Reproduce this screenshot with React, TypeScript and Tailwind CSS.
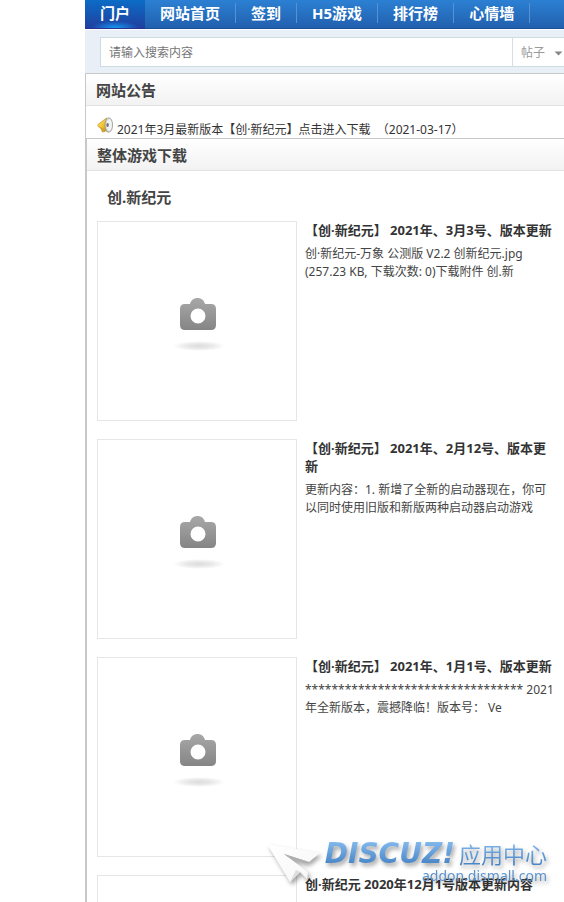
import React from "react";

interface Post {
  title: string;
  summary: string;
}

const navItems = ["网站首页", "签到", "H5游戏", "排行榜", "心情墙"];

const posts: Post[] = [
  {
    title: "【创·新纪元】 2021年、3月3号、版本更新",
    summary:
      "创·新纪元-万象 公测版 V2.2 创新纪元.jpg (257.23 KB, 下载次数: 0)下载附件 创.新",
  },
  {
    title: "【创·新纪元】 2021年、2月12号、版本更新",
    summary:
      "更新内容：1. 新增了全新的启动器现在，你可以同时使用旧版和新版两种启动器启动游戏",
  },
  {
    title: "【创·新纪元】 2021年、1月1号、版本更新",
    summary:
      "********************************* 2021年全新版本，震撼降临！版本号： Ve",
  },
  {
    title: "创·新纪元 2020年12月1号版本更新内容",
    summary: "",
  },
];

const CameraIcon: React.FC = () => (
  <svg width="54" height="56" viewBox="0 0 54 56" aria-hidden="true">
    <defs>
      <linearGradient id="camera" x1="0" y1="0" x2="0" y2="1">
        <stop offset="0" stopColor="#a8a8a8" />
        <stop offset="1" stopColor="#858585" />
      </linearGradient>
      <radialGradient id="shadow">
        <stop offset="0" stopColor="#dcdcdc" />
        <stop offset="0.5" stopColor="#e9e9e9" />
        <stop offset="1" stopColor="#ffffff" />
      </radialGradient>
    </defs>
    <path
      fill="url(#camera)"
      fillRule="evenodd"
      d="M14 7 H19 C20 3 23 1 26.500 1 C30 1 33 3 34 7 H40 Q45 7 45 12 V28 Q45 33 40 33 H14 Q9 33 9 28 V12 Q9 7 14 7 Z M27 11.500 A7.500 7.500 0 1 0 27 26.500 A7.500 7.500 0 1 0 27 11.500 Z"
    />
    <ellipse cx="28" cy="49" rx="26" ry="5" fill="url(#shadow)" />
  </svg>
);

const HornIcon: React.FC = () => (
  <svg width="16" height="16" viewBox="0 0 16 16" aria-hidden="true">
    <defs>
      <linearGradient id="horn" x1="0" y1="0" x2="1" y2="1">
        <stop offset="0" stopColor="#fdf08a" />
        <stop offset="0.6" stopColor="#f0b81c" />
        <stop offset="1" stopColor="#9a6a10" />
      </linearGradient>
    </defs>
    <path d="M3 9.500 L6 10.500 L8 14.500 L5.500 15 Z" fill="#e0b02a" stroke="#a87c1c" strokeWidth="0.6" />
    <path d="M1 7.500 L9.500 1 L11 15 L1.500 9.800 Q0.500 9 1 7.500 Z" fill="url(#horn)" stroke="#c0942a" strokeWidth="0.7" />
    <ellipse cx="11.800" cy="8" rx="3.800" ry="7.200" fill="#d9dde2" stroke="#98958a" strokeWidth="0.8" />
    <ellipse cx="12.300" cy="8" rx="2.500" ry="5.700" fill="#f1f3f5" />
    <ellipse cx="10.600" cy="8" rx="1.200" ry="2.100" fill="#6c6f76" />
  </svg>
);

const Nav: React.FC = () => (
  <nav className="flex h-[29px] border-b border-[#1d4f95] bg-linear-to-b from-[#2c80d3] to-[#2160ae] text-[15px] leading-[26px] font-bold whitespace-nowrap text-white">
    <a
      href="#portal"
      className="h-[29px] border-b border-[#29328f] bg-[radial-gradient(ellipse_24px_7px_at_50%_100%,#149bf5,transparent),linear-gradient(#0b6cc6,#2040a0)] px-[15px]"
    >
      门户
    </a>
    {navItems.map((item) => (
      <div key={item} className="flex">
        <a href={`#${item}`} className="px-[15px]">
          {item}
        </a>
        <span className="mt-[3px] h-5 w-px bg-[#5593d6]" />
      </div>
    ))}
  </nav>
);

const SearchBar: React.FC = () => (
  <form className="mt-px flex bg-[#e8eff7] pt-[7px] pb-[6px] pl-[15px] text-xs">
    <div className="flex h-[30px] flex-1 border-y border-l border-[#cedce4] bg-white">
      <input
        type="text"
        aria-label="搜索"
        placeholder="请输入搜索内容"
        className="min-w-0 flex-1 px-2 pt-0.5 outline-none placeholder:text-[#757575]"
      />
      <div className="flex items-center border-l border-[#d8dfe4] pt-0.5 pl-2 text-[#999]">
        <select aria-label="搜索类型" className="w-[33px] appearance-none outline-none">
          <option>帖子</option>
        </select>
        <svg width="10" height="5" viewBox="0 0 10 5" aria-hidden="true">
          <path d="M0.500 0.500 H8.500 L4.500 4.500 Z" fill="#888" />
        </svg>
      </div>
    </div>
  </form>
);

const PanelTitle: React.FC<{ children: React.ReactNode }> = ({ children }) => (
  <h2 className="h-8 border-b border-[#e3e3e3] bg-linear-to-b from-white to-[#f2f2f2] px-[10px] text-[15px] leading-8 font-bold text-[#444]">
    {children}
  </h2>
);

const PostItem: React.FC<{ post: Post }> = ({ post }) => (
  <li className="flex gap-2">
    <a
      href="#post"
      aria-label={post.title}
      className="flex size-[200px] shrink-0 items-center justify-center border border-[#e6e6e6] pt-2 pl-0.5"
    >
      <CameraIcon />
    </a>
    <div className="min-w-0 flex-1 leading-[18px]">
      <h4 className="text-[13px] font-bold text-[#333]">
        <a href="#post">{post.title}</a>
      </h4>
      <p className="mt-[6px] text-xs leading-[18px] text-[#444]">{post.summary}</p>
    </div>
  </li>
);

// Discuz! addon badge, floats over the bottom right corner
const AddonBadge: React.FC = () => (
  <div className="pointer-events-none fixed right-[17px] bottom-[14px] flex drop-shadow-[2px_3px_2px_rgba(0,0,0,0.35)]">
    <svg width="58" height="44" viewBox="0 0 58 44" className="mt-1" aria-hidden="true">
      <defs>
        <linearGradient id="plane" x1="0" y1="0" x2="1" y2="1">
          <stop offset="0" stopColor="#ffffff" />
          <stop offset="1" stopColor="#f6f6f6" />
        </linearGradient>
      </defs>
      <path d="M0 0 L53 9 L42 18 L17 10 L41 28 L40 35 L33 28 L23 38 Z" fill="url(#plane)" />
      <path d="M17 10 L42 18 L39 19 L26 16 Z" fill="#b0b0b0" />
      <path d="M23 38 L33 28 L29 26 Z" fill="#dddddd" />
    </svg>
    <div className="flex flex-col items-end">
      <div className="flex items-center gap-1 bg-linear-to-b from-[#86bdf0] to-[#3f7dc0] bg-clip-text leading-7 whitespace-nowrap text-transparent">
        <span className="font-['DejaVu_Sans',sans-serif] text-[28px] font-bold italic">DISCUZ!</span>
        <span className="text-[22px]">应用中心</span>
      </div>
      <span className="text-sm leading-4 text-[#5b92cc]">addon.dismall.com</span>
    </div>
  </div>
);

const App: React.FC = () => {
  return (
    <div className="h-screen overflow-x-hidden bg-white pl-[85px] font-['Noto_Sans','Noto_Sans_CJK_SC',sans-serif] text-xs text-[#333]">
      <Nav />
      <SearchBar />
      <main className="border-t border-l border-[#c8c8c8]">
        <section>
          <PanelTitle>网站公告</PanelTitle>
          <div className="flex h-8 items-start pt-[11px] pl-[11px]">
            <HornIcon />
            <a href="#notice" className="mt-1 ml-1 leading-[18px] whitespace-pre">
              2021年3月最新版本【创·新纪元】点击进入下载  （2021-03-17）
            </a>
          </div>
        </section>
        <section className="border-t border-l border-[#c8c8c8]">
          <PanelTitle>整体游戏下载</PanelTitle>
          <h3 className="pt-4 pb-[14px] pl-5 text-[15px] leading-5 font-bold text-[#444]">
            创.新纪元
          </h3>
          <ul className="flex flex-col gap-[18px] px-[10px]">
            {posts.map((post) => (
              <PostItem key={post.title} post={post} />
            ))}
          </ul>
        </section>
      </main>
      <AddonBadge />
    </div>
  );
};

export default App;
